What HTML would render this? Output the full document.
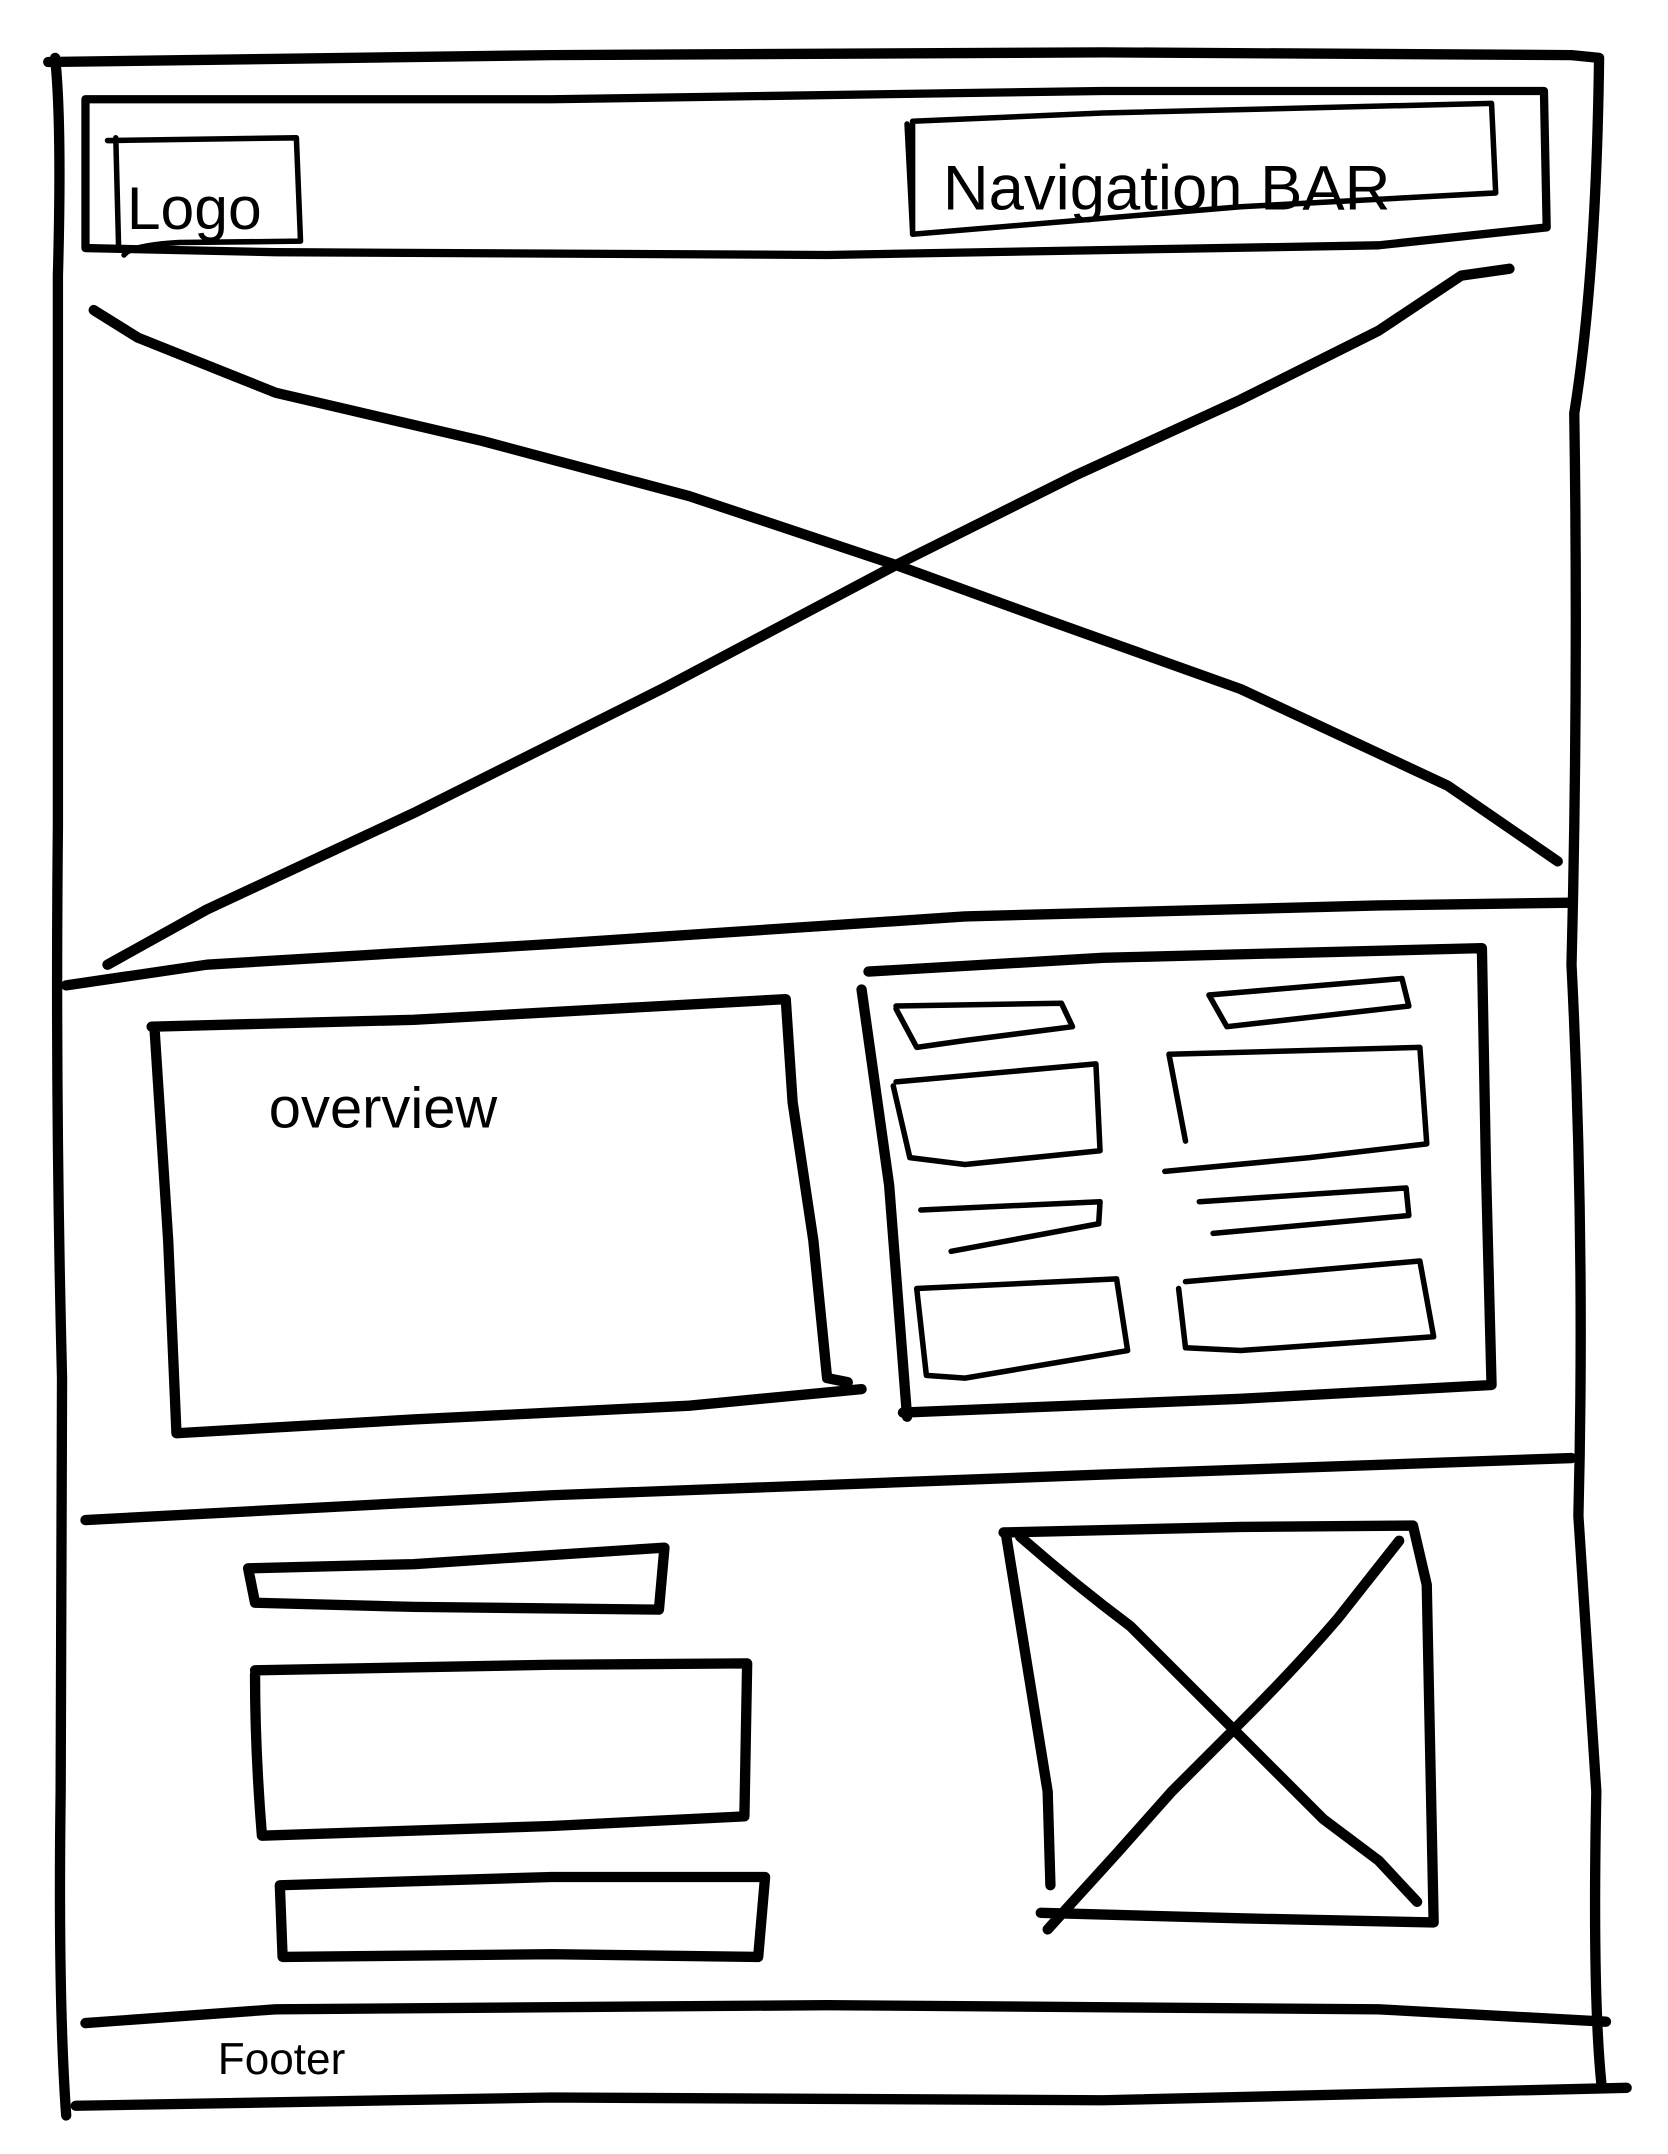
<!DOCTYPE html>
<html><head><meta charset="utf-8"><style>
html,body{margin:0;padding:0;background:#fff;}
svg{display:block;}
text{font-family:"Liberation Sans",sans-serif;fill:#000;}
</style></head><body>
<svg width="1668" height="2154" viewBox="0 0 1210 1563" preserveAspectRatio="none" xmlns="http://www.w3.org/2000/svg">
<g fill="none" stroke="#000" stroke-width="7.5" stroke-linecap="round" stroke-linejoin="round">
<!-- outer border -->
<path d="M35 45 L400 40 L800 38 L1140 40 L1160 42 M40 42 Q45 90 42 200 L42 600 Q40 800 45 1000 L44 1300 Q42 1450 48 1535 M1160 42 Q1158 200 1142 300 Q1145 500 1140 700 Q1150 900 1145 1100 L1158 1300 Q1155 1450 1162 1515 M55 1528 L400 1522 L800 1524 L1180 1515"/>
<!-- header -->
<path d="M62 72 L400 72 L800 66 L1120 66 L1122 165 L1000 178 L600 185 L200 183 L62 180 Z" stroke-width="6"/>
<path d="M78 102 L215 100 L218 175 L130 176 Q95 178 90 185 M84 100 L86 178" stroke-width="4"/>
<path d="M662 88 L800 82 L1082 75 L1085 140 L900 150 L662 170 Z M658 90 L662 168" stroke-width="4"/>
<!-- hero X -->
<path d="M68 225 L100 245 L200 285 L350 320 L500 360 L650 410 L760 450 L900 500 L1050 570 L1130 625"/>
<path d="M1095 195 L1060 200 L1000 240 L900 290 L780 345 L650 410 L480 500 L300 590 L150 660 L78 700"/>
<!-- divider -->
<path d="M48 715 L150 700 L400 685 L700 665 L1000 657 L1140 655"/>
<!-- overview -->
<path d="M110 745 L300 740 L570 725 L575 800 L590 900 L600 1000 L615 1003 M112 745 L122 900 L128 1040 L300 1030 L500 1020 L625 1008"/>
<!-- right panel -->
<path d="M630 705 L800 695 L1075 688 L1078 850 L1082 1005 L900 1015 L655 1025 M625 718 L645 860 L658 1028"/>
<g stroke-width="4">
<path d="M650 730 L770 728 L778 745 L700 755 L665 760 L650 732"/>
<path d="M650 785 L795 772 L798 835 L700 845 L660 840 L648 788"/>
<path d="M877 722 L1017 710 L1022 730 L890 745 Z"/>
<path d="M848 765 L1030 760 L1035 830 L950 840 L845 850 M848 765 L860 828"/>
<path d="M668 878 L798 872 L797 888 L690 908"/>
<path d="M870 872 L1020 862 L1022 882 L880 895"/>
<path d="M665 935 L810 928 L818 980 L700 1000 L672 998 Z"/>
<path d="M860 930 L1030 915 L1040 970 L900 980 L860 978 L855 935"/>
</g>
<!-- divider 2 -->
<path d="M62 1103 L400 1085 L800 1070 L1140 1058"/>
<!-- bottom left boxes -->
<path d="M180 1138 L300 1135 L482 1123 L478 1168 L300 1166 L185 1163 Z"/>
<path d="M185 1212 L400 1208 L542 1207 L540 1318 L400 1325 L190 1332 Q185 1270 185 1215"/>
<path d="M203 1368 L400 1362 L555 1362 L550 1420 L400 1418 L205 1420 Z"/>
<!-- bottom image X -->
<path d="M728 1112 L900 1108 L1025 1107 L1035 1150 L1040 1395 L900 1392 L755 1388 M730 1115 L760 1300 L762 1368"/>
<path d="M740 1115 Q780 1150 820 1180 L900 1260 L960 1320 L1000 1350 L1028 1380"/>
<path d="M1015 1118 L970 1175 Q940 1210 900 1250 L850 1300 L810 1345 L760 1400"/>
<!-- footer line -->
<path d="M62 1468 L200 1458 L600 1455 L1000 1458 L1165 1467"/>
</g>
<text x="92" y="166" font-size="44">Logo</text>
<text x="684" y="152" font-size="46">Navigation BAR</text>
<text x="195" y="818" font-size="42">overview</text>
<text x="158" y="1505" font-size="32">Footer</text>
</svg>
</body></html>
